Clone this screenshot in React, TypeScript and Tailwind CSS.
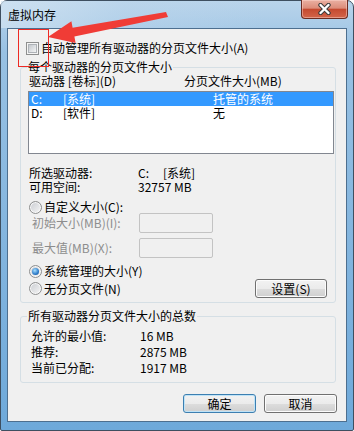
import type { ReactNode } from "react";

function Checkbox() {
    return (
        <span className="flex h-[13px] w-[13px] shrink-0 items-center justify-center border border-[#8e8f8f] bg-[#f4f4f4]">
            <span className="h-[9px] w-[9px] border border-[#aeb2b7] bg-[linear-gradient(135deg,#c4c8cd,#f3f4f5)]" />
        </span>
    );
}

function Radio({ checked = false }: { checked?: boolean }) {
    return (
        <span className="flex h-[13px] w-[13px] shrink-0 items-center justify-center rounded-full border border-[#8e8f8f] bg-[linear-gradient(135deg,#c9ccd1,#f6f6f6)] shadow-[inset_0_0_0_1px_#f8f8f8]">
            {checked && (
                <span className="h-[7px] w-[7px] rounded-full bg-[radial-gradient(circle_at_40%_35%,#a8e0ff,#2d7bc9_60%,#17508f)]" />
            )}
        </span>
    );
}

function Button({ children, isDefault = false, className = "" }: { children: ReactNode; isDefault?: boolean; className?: string }) {
    return (
        <div
            className={`flex h-[19px] items-center justify-center rounded-[3px] border bg-[linear-gradient(#f2f2f2_0%,#ebebeb_50%,#dddddd_50%,#cfcfcf_100%)] leading-[14px] ${
                isDefault
                    ? "border-[#3c7fb1] shadow-[inset_0_0_0_1px_#bfe3f7]"
                    : "border-[#707070] shadow-[inset_0_0_0_1px_#fcfcfc]"
            } ${className}`}
        >
            {children}
        </div>
    );
}

function GroupBox({ label, children, className = "" }: { label: string; children: ReactNode; className?: string }) {
    return (
        <fieldset className={`rounded-[3px] border border-[#d5dfe5] ${className}`}>
            <legend className="ml-[6px] px-[1px] leading-[14px]">{label}</legend>
            {children}
        </fieldset>
    );
}

export default function App() {
    return (
        <div className="relative h-[431px] w-[354px] bg-white font-['Noto_Sans_CJK_SC',sans-serif] text-[12px] text-black">
            {/* window frame */}
            <div className="flex h-[431px] w-[354px] flex-col rounded-t-[7px] rounded-b-[2px] border border-[#3e4f60] bg-[linear-gradient(180deg,#b9d4eb_0%,#98c1e3_12%,#6ea9da_100%)]">
                {/* title bar */}
                <div className="flex h-[27px] items-start justify-between bg-[linear-gradient(100deg,rgba(214,230,243,0.7)_0%,rgba(190,215,236,0.4)_35%,rgba(140,185,222,0)_75%)]">
                    <span className="pl-[7px] leading-[27px] text-[12px]">虚拟内存</span>
                    <div className="-mt-px mr-[5px] flex h-[19px] w-[47px] items-center justify-center rounded-b-[4px] border border-t-0 border-[#6b2c22] bg-[linear-gradient(180deg,#eab0a2_0%,#dc8d7a_45%,#c54a30_52%,#d3654a_100%)] shadow-[inset_0_0_0_1px_rgba(255,220,210,0.45)]">
                        <svg width="15" height="12" viewBox="0 0 15 12">
                            <path d="M3.5 2 L11.5 10 M11.5 2 L3.5 10" stroke="#3b3b3b" strokeWidth="4.4" strokeLinecap="round" />
                            <path d="M3.5 2 L11.5 10 M11.5 2 L3.5 10" stroke="#ffffff" strokeWidth="2.4" strokeLinecap="round" />
                        </svg>
                    </div>
                </div>

                {/* client area */}
                <div className="mx-[6px] mb-[8px] flex flex-1 flex-col border border-[#4d6f8f] bg-[#f0f0f0] pl-[12px] pr-[10px] leading-[14px]">
                    <div className="mt-[11px] flex h-[16px] items-center gap-[2px] pl-[6px]">
                        <Checkbox />
                        <span>自动管理所有驱动器的分页文件大小(A)</span>
                    </div>

                    <GroupBox label="每个驱动器的分页文件大小" className="mt-[4px] pb-[4px]">
                        <div className="flex h-[14px] pl-[8px]">
                            <span className="w-[155px]">驱动器 [卷标](D)</span>
                            <span>分页文件大小(MB)</span>
                        </div>

                        <div className="ml-[7px] mt-[3px] h-[63px] w-[306px] border border-[#828790] bg-white leading-[14px]">
                            <div className="flex h-[14px] bg-[#3399ff] pl-[2px] text-white">
                                <span className="w-[32px]">C:</span>
                                <span className="w-[150px]">[系统]</span>
                                <span>托管的系统</span>
                            </div>
                            <div className="flex h-[14px] pl-[2px]">
                                <span className="w-[32px]">D:</span>
                                <span className="w-[150px]">[软件]</span>
                                <span>无</span>
                            </div>
                        </div>

                        <div className="mt-[12px] flex h-[14px] pl-[8px]">
                            <span className="w-[109px]">所选驱动器:</span>
                            <span className="w-[25px]">C:</span>
                            <span>[系统]</span>
                        </div>
                        <div className="flex h-[14px] pl-[8px]">
                            <span className="w-[109px]">可用空间:</span>
                            <span>32757 MB</span>
                        </div>

                        <div className="mt-[7px] flex h-[12px] items-center gap-[2px] pl-[8px]">
                            <Radio />
                            <span>自定义大小(C):</span>
                        </div>
                        <div className="flex h-[20px] items-center pl-[11px] text-[#8d8d8d]">
                            <span className="w-[107px]">初始大小(MB)(I):</span>
                            <span className="h-[20px] w-[74px] rounded-[2px] border border-[#c3c3c3] bg-[#f0f0f0]" />
                        </div>
                        <div className="mt-[5px] flex h-[20px] items-center pl-[11px] text-[#8d8d8d]">
                            <span className="w-[107px]">最大值(MB)(X):</span>
                            <span className="h-[20px] w-[74px] rounded-[2px] border border-[#c3c3c3] bg-[#f0f0f0]" />
                        </div>

                        <div className="mt-[6px] flex h-[14px] items-center gap-[2px] pl-[8px]">
                            <Radio checked />
                            <span>系统管理的大小(Y)</span>
                        </div>
                        <div className="mt-[1px] flex h-[19px] items-center pl-[8px] pr-[8px]">
                            <Radio />
                            <span className="ml-[2px]">无分页文件(N)</span>
                            <Button className="ml-auto w-[72px]">设置(S)</Button>
                        </div>
                    </GroupBox>

                    <GroupBox label="所有驱动器分页文件大小的总数" className="mt-[6px] pb-[6px]">
                        <div className="mt-[5px] flex h-[16px] items-center pl-[10px]">
                            <span className="w-[109px]">允许的最小值:</span>
                            <span>16 MB</span>
                        </div>
                        <div className="flex h-[16px] items-center pl-[10px]">
                            <span className="w-[109px]">推荐:</span>
                            <span>2875 MB</span>
                        </div>
                        <div className="flex h-[16px] items-center pl-[10px]">
                            <span className="w-[109px]">当前已分配:</span>
                            <span>1917 MB</span>
                        </div>
                    </GroupBox>

                    <div className="-mr-px mt-[11px] flex justify-end gap-[8px]">
                        <Button isDefault className="w-[73px]">确定</Button>
                        <Button className="w-[73px]">取消</Button>
                    </div>
                </div>
            </div>

            {/* screenshot annotation */}
            <svg className="pointer-events-none absolute left-0 top-0" width="354" height="431" viewBox="0 0 354 431">
                <rect x="18.5" y="29.5" width="30" height="37" fill="none" stroke="#ee2a24" strokeWidth="1" shapeRendering="crispEdges" />
                <polygon
                    points="166,12 168,17 74.4,36.5 75.6,42.9 48,37 71.4,21.3 72.6,27.7"
                    fill="#f03c36"
                />
            </svg>
        </div>
    );
}
